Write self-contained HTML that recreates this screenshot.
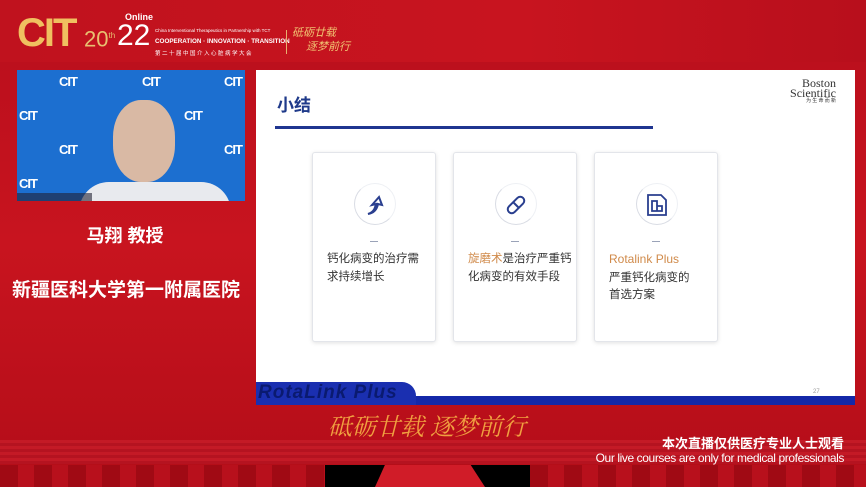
<!DOCTYPE html>
<html><head><meta charset="utf-8"><style>
*{margin:0;padding:0;box-sizing:border-box}
body{width:866px;height:487px;overflow:hidden;position:relative;background:linear-gradient(180deg,#b80e1c 0%,#c8141f 50%,#b30d18 100%);font-family:"Liberation Sans","Noto Sans CJK SC",sans-serif}
.a{position:absolute}
.card{position:absolute;top:152px;width:124px;height:190px;background:#fff;border:1px solid #e3e5ea;border-radius:3px;box-shadow:0 1px 4px rgba(0,0,0,.12)}
.circ{position:absolute;left:41px;top:30px;width:42px;height:42px;border-radius:50%;border:1px solid #d9dce4;border-right-color:#eef0f4;border-top-color:#eef0f4}
.dash{position:absolute;left:57px;top:88px;width:8px;height:1px;background:#9aa3b8}
.txt{position:absolute;left:14px;top:98px;font-size:11.5px;line-height:17.5px;color:#333}
.or{color:#d08a4a}
.cit{position:absolute;color:#fff;font-weight:bold;font-size:13px;letter-spacing:-1px}
.pat{background:repeating-linear-gradient(90deg,#a00a14 0 18px,#b8101c 18px 34px)}
</style></head><body>
<div class="a" style="left:0;top:0;width:866px;height:62px;background:linear-gradient(90deg,#c0121e,#c8141f 60%,#b80f1c)"></div>
<div class="a" style="left:17px;top:11px;font-size:40px;font-weight:bold;color:#f0c060;letter-spacing:-2px;line-height:44px">CIT</div>
<div class="a" style="left:84px;top:24px;font-size:22px;color:#e8c070;line-height:24px">20<sup style="font-size:8px">th</sup></div>
<div class="a" style="left:125px;top:12px;font-size:9px;font-weight:bold;color:#fff">Online</div>
<div class="a" style="left:117px;top:20px;font-size:30px;color:#fff;line-height:32px">22</div>
<div class="a" style="left:155px;top:28px;font-size:4.5px;color:#fff">China Interventional Therapeutics in Partnership with TCT</div>
<div class="a" style="left:155px;top:38px;font-size:6.3px;color:#fff;font-weight:bold;white-space:nowrap">COOPERATION · INNOVATION · TRANSITION</div>
<div class="a" style="left:155px;top:49px;font-size:5.5px;color:#fff;letter-spacing:1.5px">第二十届中国介入心脏病学大会</div>
<div class="a" style="left:286px;top:30px;width:1px;height:24px;background:#e8b070"></div>
<div class="a" style="left:292px;top:26px;font-size:11px;line-height:14px;color:#f0c070;font-style:italic">砥砺廿载<br><span style="margin-left:14px">逐梦前行</span></div>
<div class="a" style="left:17px;top:70px;width:228px;height:131px;background:#1c6fd0;overflow:hidden">
<div class="cit" style="left:42px;top:4px">CIT</div><div class="cit" style="left:125px;top:4px">CIT</div><div class="cit" style="left:207px;top:4px">CIT</div>
<div class="cit" style="left:2px;top:38px">CIT</div><div class="cit" style="left:167px;top:38px">CIT</div>
<div class="cit" style="left:42px;top:72px">CIT</div><div class="cit" style="left:207px;top:72px">CIT</div>
<div class="cit" style="left:2px;top:106px">CIT</div>
<div class="a" style="left:62px;top:112px;width:152px;height:30px;border-radius:40px 40px 0 0;background:#e8eaee"></div>
<div class="a" style="left:96px;top:30px;width:62px;height:82px;border-radius:45%;background:#d9b9a4"></div>
<div class="a" style="left:0;top:123px;width:75px;height:8px;background:#223;opacity:.6"></div>
</div>
<div class="a" style="left:0;top:222px;width:250px;text-align:center;font-size:18px;font-weight:bold;color:#fff">马翔 教授</div>
<div class="a" style="left:0;top:275px;width:252px;text-align:center;font-size:19px;font-weight:bold;color:#fff">新疆医科大学第一附属医院</div>
<div class="a" style="left:256px;top:70px;width:599px;height:335px;background:#fff"></div>
<div class="a" style="left:277px;top:91px;font-size:17px;font-weight:bold;color:#1f3a8a">小结</div>
<div class="a" style="left:275px;top:126px;width:378px;height:3px;background:#1f3590"></div>
<div class="a" style="left:780px;top:78px;font-family:'Liberation Serif',serif;font-size:12px;line-height:10px;color:#333;text-align:right;width:56px">Boston<br>Scientific<div style="font-size:5px;line-height:8px">为 生 命 而 新</div></div>
<div class="card" style="left:312px"><div class="circ"></div>
<svg class="a" style="left:50px;top:40px" width="24" height="24" viewBox="0 0 24 24" fill="none" stroke="#2a3f8f" stroke-width="2"><path d="M5 21c6-2 7-6 8-10l-4 1 7-8 3 8-4-1c-1 5-4 9-10 10z"/></svg>
<div class="dash"></div><div class="txt">钙化病变的治疗需<br>求持续增长</div></div>
<div class="card" style="left:453px"><div class="circ"></div>
<svg class="a" style="left:50px;top:40px" width="24" height="24" viewBox="0 0 24 24" fill="none" stroke="#2a3f8f" stroke-width="2"><rect x="2" y="8" width="20" height="8" rx="4" transform="rotate(-45 12 12)"/><path d="M9 9l6 6"/></svg>
<div class="dash"></div><div class="txt"><span class="or">旋磨术</span>是治疗严重钙<br>化病变的有效手段</div></div>
<div class="card" style="left:594px"><div class="circ"></div>
<svg class="a" style="left:50px;top:40px" width="24" height="24" viewBox="0 0 24 24" fill="none" stroke="#2a3f8f" stroke-width="1.8"><path d="M3 2h13l5 5v15H3z"/><path d="M7 8h5v10H7zM12 13h5v5h-5"/></svg>
<div class="dash"></div><div class="txt"><span class="or" style="font-size:12px">Rotalink Plus</span><br>严重钙化病变的<br>首选方案</div></div>
<div class="a" style="left:813px;top:389px;font-size:6px;color:#999">27</div>
<div class="a" style="left:256px;top:396px;width:599px;height:9px;background:#1428a8"></div>
<div class="a" style="left:256px;top:382px;width:160px;height:23px;background:#1a2fb0;border-radius:0 14px 0 0"></div>
<div class="a" style="left:258px;top:382px;font-size:19px;font-weight:bold;color:#0a1a70;font-style:italic;letter-spacing:1px">RotaLink Plus</div>
<div class="a" style="left:328px;top:407px;font-size:24px;color:#f0a040;font-style:italic;font-family:'Noto Serif CJK SC',serif">砥砺廿载 逐梦前行</div>
<div class="a" style="left:0;top:440px;width:866px;height:24px;background:repeating-linear-gradient(180deg,#c41a26 0 3px,#b51320 3px 6px)"></div>
<div class="a" style="right:22px;top:433px;font-size:13px;font-weight:bold;color:#fff">本次直播仅供医疗专业人士观看</div>
<div class="a" style="right:22px;top:451px;font-size:12px;color:#fff;letter-spacing:-.4px">Our live courses are only for medical professionals</div>
<div class="a" style="left:0;top:465px;width:866px;height:22px;background:#000"></div>
<div class="a pat" style="left:0;top:465px;width:325px;height:22px"></div>
<div class="a" style="left:375px;top:465px;width:110px;height:22px;background:#d01c28;clip-path:polygon(9% 0,87% 0,100% 100%,0 100%)"></div>
<div class="a pat" style="left:530px;top:465px;width:336px;height:22px"></div>
</body></html>
